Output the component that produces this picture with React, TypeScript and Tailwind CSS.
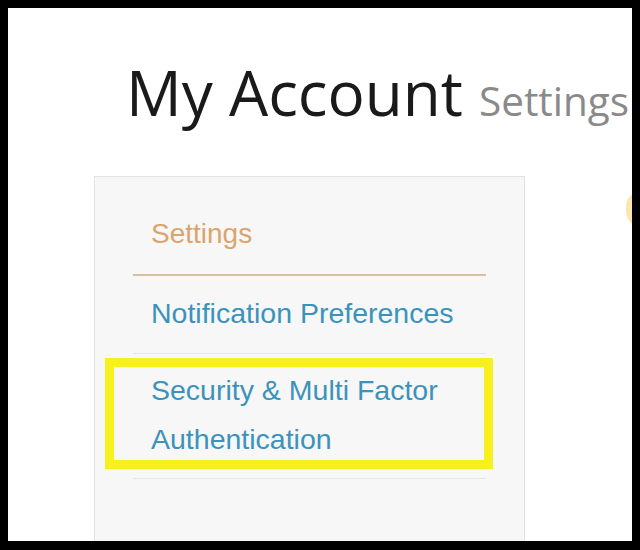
export default function App() {
  return (
    <div className="w-[640px] h-[550px] bg-black pt-[8px] pl-[8px] pr-[8px] pb-[9px]">
      <div className="w-full h-full bg-white overflow-hidden pt-[54px]">
        <div
          className="flex items-baseline pl-[118px] whitespace-nowrap leading-[60px]"
          style={{ fontFamily: '"Open Sans", sans-serif' }}
        >
          <span className="text-[62px] text-[#1a1a1a]">My Account</span>
          <span className="text-[40.5px] text-[#8a8a8a] ml-[16px]">Settings</span>
        </div>
        <div className="flex mt-[45px] pl-[86px]">
          <div
            className="w-[431px] h-[400px] shrink-0 bg-[#f7f7f7] border border-[#e2e2e2] pt-[32px] px-[38px]"
            style={{ fontFamily: '"Liberation Sans", Arial, sans-serif' }}
          >
            <div className="pl-[18px] pb-[16px] border-b-2 border-[#dcc09e] text-[28px] leading-[49px] text-[#dba46e]">
              Settings
            </div>
            <div className="pl-[18px] pt-[13px] pb-[15px] border-b border-[#e6e6e6] text-[28.5px] leading-[49px] text-[#3b93bc]">
              Notification Preferences
            </div>
            <div className="relative pl-[18px] pt-[12px] pb-[14px] border-b border-[#e6e6e6] text-[28.5px] leading-[49px] text-[#3b93bc]">
              Security &amp; Multi Factor
              <br />
              Authentication
              <div className="absolute left-[-28px] top-[4px] w-[388px] h-[111px] border-[9px] border-[#f7ef1e]" />
            </div>
          </div>
          <div className="ml-[101px] mt-[14px] w-[34px] h-[38px] shrink-0 rounded-full bg-[#fbe7ae]" />
        </div>
      </div>
    </div>
  );
}
